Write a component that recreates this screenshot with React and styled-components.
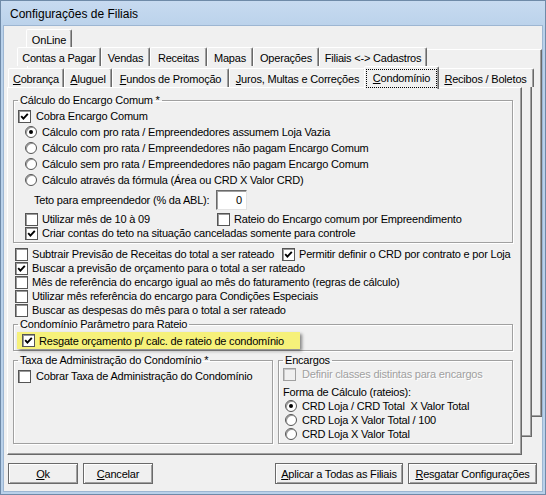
import React from 'react';
import styled, { createGlobalStyle } from 'styled-components';

const Global = createGlobalStyle`
  html, body { margin: 0; padding: 0; background: #fff; }
  body {
    font-family: "Liberation Sans", Arial, sans-serif;
    font-size: 11px;
    letter-spacing: -0.2px;
    color: #000;
  }
  * { box-sizing: border-box; }
`;

const Window = styled.div`
  width: 546px;
  height: 495px;
  background: linear-gradient(#c7daf0, #b9d1ea 30px);
  border: 1px solid #6f8aa8;
  padding: 0 3px 3px 3px;
  display: flex;
  flex-direction: column;
`;

const TitleBar = styled.div`
  height: 25px;
  flex: none;
  display: flex;
  align-items: center;
  padding-left: 6px;
  font-size: 12px;
  letter-spacing: 0;
`;

const Client = styled.div`
  flex: 1;
  background: #f0f0f0;
  display: flex;
  flex-direction: column;
  padding-top: 3px;
  box-shadow: 0 0 0 1px #9db6d2;
`;

const TabRow = styled.div`
  position: relative;
  z-index: 2;
  display: flex;
  align-items: flex-end;
  height: ${p => p.$h}px;
  padding-left: ${p => p.$indent}px;
`;

const Tab = styled.div`
  flex: none;
  width: ${p => p.$w}px;
  height: ${p => p.$th}px;
  background: #f0f0f0;
  border: 1px solid;
  border-bottom: none;
  border-color: #fff #696969 transparent #fff;
  border-radius: 2px 2px 0 0;
  box-shadow: inset -1px 0 0 #a0a0a0;
  display: flex;
  align-items: center;
  justify-content: center;
  padding-top: 2px;
  white-space: nowrap;
`;

const ActiveTab = styled(Tab)`
  position: relative;
  width: ${p => p.$w + 4}px;
  height: ${p => p.$th + 4}px;
  margin: 0 -2px -2px -2px;
  padding-top: 0;
  z-index: 3;
`;

const Focus = styled.span`
  border: 1px dotted #000;
  padding: 2px 6px 2px 6px;
  line-height: 13px;
`;

const PageStack = styled.div`
  position: relative;
  margin-left: 3px;
  width: 515px;
  height: 368px;
  flex: none;
`;

const BackPage = styled.div`
  position: absolute;
  z-index: 0;
  left: ${p => p.$dx}px;
  top: ${p => -p.$dy}px;
  width: 100%;
  height: 100%;
  background: #f0f0f0;
  border: 1px solid;
  border-color: #fff #696969 #696969 #fff;
  box-shadow: inset -1px -1px 0 #a0a0a0;
`;

const Page = styled.div`
  position: relative;
  z-index: 1;
  height: 100%;
  background: #f0f0f0;
  border: 1px solid;
  border-color: #fff #696969 #696969 #fff;
  box-shadow: inset -1px -1px 0 #a0a0a0;
  padding: 6px 8px 0 5px;
`;

const Group = styled.fieldset`
  margin: ${p => p.$mt || 0}px 0 0 0;
  padding: ${p => p.$pad || '1px 0 2px 0'};
  min-width: 0;
  border: 1px solid #a0a0a0;
  box-shadow: inset 1px 1px 0 #fff, 1px 1px 0 #fff;
`;

const Caption = styled.legend`
  margin-left: 4px;
  padding: 0 2px;
  height: 13px;
  line-height: 13px;
  white-space: nowrap;
`;

const Row = styled.div`
  display: flex;
  align-items: center;
  height: ${p => p.$h || 14}px;
  margin-top: ${p => p.$mt || 0}px;
  padding-left: ${p => p.$indent || 0}px;
  white-space: nowrap;
`;

const Item = styled.label`
  display: flex;
  align-items: center;
  gap: ${p => p.$gap || 4}px;
  width: ${p => (p.$w ? `${p.$w}px` : 'auto')};
  flex: none;
  color: ${p => (p.$disabled ? '#a0a0a0' : '#000')};
  text-shadow: ${p => (p.$disabled ? '1px 1px 0 #fff' : 'none')};
`;

const Box = styled.span`
  flex: none;
  width: 13px;
  height: 13px;
  background: ${p => (p.$disabled ? '#f0f0f0' : '#fff')};
  border: 1px solid ${p => (p.$disabled ? '#a0a0a0' : '#555')};
  box-shadow: inset 1px 1px 0 ${p => (p.$disabled ? '#c8c8c8' : '#999')};
  display: flex;
  align-items: center;
  justify-content: center;
`;

const Circle = styled.span`
  flex: none;
  width: 12px;
  height: 12px;
  border-radius: 50%;
  background: #fff;
  border: 1px solid #555;
  box-shadow: inset 1px 1px 0 #999;
  display: flex;
  align-items: center;
  justify-content: center;
`;

const Dot = styled.span`
  width: 4px;
  height: 4px;
  border-radius: 50%;
  background: #000;
`;

const Text = styled.span`
  width: ${p => (p.$w ? `${p.$w}px` : 'auto')};
  flex: none;
`;

const NumInput = styled.div`
  width: 31px;
  height: 20px;
  background: #fff;
  border: 1px solid;
  border-color: #6a6a6a #e3e3e3 #e3e3e3 #6a6a6a;
  box-shadow: inset 1px 1px 0 #a0a0a0;
  display: flex;
  align-items: center;
  justify-content: flex-end;
  padding-right: 4px;
`;

const Highlight = styled.div`
  display: flex;
  align-items: center;
  width: 283px;
  height: 17px;
  margin-left: 3px;
  padding-left: 5px;
  background: #f6f17a;
  box-shadow: 2px 2px 3px rgba(0, 0, 0, 0.45);
`;

const Columns = styled.div`
  display: grid;
  grid-template-columns: 260px 235px;
  column-gap: 5px;
  margin-top: 3px;
`;

const ButtonBar = styled.div`
  display: flex;
  height: 21px;
  margin-top: 8px;
  padding: 0 5px 0 4px;
  gap: 5px;
`;

const Button = styled.div`
  width: ${p => p.$w}px;
  height: 21px;
  margin-left: ${p => (p.$push ? 'auto' : '0')};
  border: 1px solid #6a6a6a;
  box-shadow: inset 1px 1px 0 #fff, inset -1px -1px 0 #a0a0a0;
  display: flex;
  align-items: center;
  justify-content: center;
  white-space: nowrap;
`;

function CheckMark() {
  return (
    <svg width="9" height="9" viewBox="0 0 9 9">
      <polyline points="1.2,4.2 3.4,6.6 7.8,1.8" fill="none" stroke="#000" strokeWidth="1.9" />
    </svg>
  );
}

function Check({ checked, disabled, children, w, gap }) {
  return (
    <Item $w={w} $gap={gap} $disabled={disabled}>
      <Box $disabled={disabled}>{checked && <CheckMark />}</Box>
      <span>{children}</span>
    </Item>
  );
}

function Radio({ checked, children, gap }) {
  return (
    <Item $gap={gap}>
      <Circle>{checked && <Dot />}</Circle>
      <span>{children}</span>
    </Item>
  );
}

const row2 = [
  ['Contas a Pagar', 84],
  ['Vendas', 49],
  ['Receitas', 57],
  ['Mapas', 46],
  ['Operações', 66],
  ['Filiais <-> Cadastros', 108],
];

const row3 = [
  ['C', 'obrança', 56],
  ['A', 'luguel', 48],
  ['F', 'undos de Promoção', 117],
  ['J', 'uros, Multas e Correções', 137],
  ['C', 'ondomínio', 71, true],
  ['R', 'ecibos / Boletos', 97],
];

export default function App() {
  return (
    <>
      <Global />
      <Window>
        <TitleBar>Configurações de Filiais</TitleBar>
        <Client>
          <TabRow $h={18} $indent={22}>
            <Tab $w={46} $th={18}>OnLine</Tab>
          </TabRow>
          <TabRow $h={19} $indent={13}>
            {row2.map(([t, w]) => (
              <Tab key={t} $w={w} $th={19}>{t}</Tab>
            ))}
          </TabRow>
          <TabRow $h={21} $indent={4}>
            {row3.map(([k, rest, w, active]) =>
              active ? (
                <ActiveTab key={rest} $w={w} $th={19}>
                  <Focus><u>{k}</u>{rest}</Focus>
                </ActiveTab>
              ) : (
                <Tab key={rest} $w={w} $th={19}><span><u>{k}</u>{rest}</span></Tab>
              )
            )}
          </TabRow>

          <PageStack>
            <BackPage $dx={20} $dy={38} />
            <BackPage $dx={10} $dy={18} />
            <Page>
              <Group>
                <Caption>Cálculo do Encargo Comum *</Caption>
                <Row $h={16} $indent={4}>
                  <Check checked gap={5}>Cobra Encargo Comum</Check>
                </Row>
                <Row $h={16} $indent={11}>
                  <Radio checked gap={5}>Cálculo com pro rata / Empreendedores assumem Loja Vazia</Radio>
                </Row>
                <Row $h={16} $indent={11}>
                  <Radio gap={5}>Cálculo com pro rata / Empreendedores não pagam Encargo Comum</Radio>
                </Row>
                <Row $h={16} $indent={11}>
                  <Radio gap={5}>Cálculo sem pro rata / Empreendedores não pagam Encargo Comum</Radio>
                </Row>
                <Row $h={16} $indent={11}>
                  <Radio gap={5}>Cálculo através da fórmula (Área ou CRD X Valor CRD)</Radio>
                </Row>
                <Row $h={20} $mt={2} $indent={20}>
                  <Text $w={182}>Teto para empreendedor (% da ABL):</Text>
                  <NumInput>0</NumInput>
                </Row>
                <Row $mt={2} $indent={11}>
                  <Check w={192} gap={4}>Utilizar mês de 10 à 09</Check>
                  <Check gap={4}>Rateio do Encargo comum por Empreendimento</Check>
                </Row>
                <Row $indent={11}>
                  <Check checked gap={4}>Criar contas do teto na situação canceladas somente para controle</Check>
                </Row>
              </Group>

              <Row $mt={4} $indent={2}>
                <Check w={267}>Subtrair Previsão de Receitas do total a ser rateado</Check>
                <Check checked>Permitir definir o CRD por contrato e por Loja</Check>
              </Row>
              <Row $indent={2}>
                <Check checked>Buscar a previsão de orçamento para o total a ser rateado</Check>
              </Row>
              <Row $indent={2}>
                <Check>Mês de referência do encargo igual ao mês do faturamento (regras de cálculo)</Check>
              </Row>
              <Row $indent={2}>
                <Check>Utilizar mês referência do encargo para Condições Especiais</Check>
              </Row>
              <Row $indent={2}>
                <Check>Buscar as despesas do mês para o total a ser rateado</Check>
              </Row>

              <Group $mt={1} $pad="1px 0 1px 0">
                <Caption>Condomínio Parâmetro para Rateio</Caption>
                <Highlight>
                  <Check checked>Resgate orçamento p/ calc. de rateio de condomínio</Check>
                </Highlight>
              </Group>

              <Columns>
                <Group $pad="2px 0 2px 0">
                  <Caption>Taxa de Administração do Condomínio *</Caption>
                  <Row $indent={4}>
                    <Check gap={5}>Cobrar Taxa de Administração do Condomínio</Check>
                  </Row>
                </Group>
                <Group $pad="0 0 2px 0">
                  <Caption>Encargos</Caption>
                  <Row $indent={4}>
                    <Check disabled gap={6}>Definir classes distintas para encargos</Check>
                  </Row>
                  <Row $mt={4} $indent={4}>
                    <Text>Forma de Cálculo (rateios):</Text>
                  </Row>
                  <Row $indent={6}>
                    <Radio checked gap={5}>CRD Loja / CRD Total&nbsp; X Valor Total</Radio>
                  </Row>
                  <Row $indent={6}>
                    <Radio gap={5}>CRD Loja X Valor Total / 100</Radio>
                  </Row>
                  <Row $indent={6}>
                    <Radio gap={5}>CRD Loja X Valor Total</Radio>
                  </Row>
                </Group>
              </Columns>
            </Page>
          </PageStack>

          <ButtonBar>
            <Button $w={70}><span><u>O</u>k</span></Button>
            <Button $w={70}><span><u>C</u>ancelar</span></Button>
            <Button $w={128} $push><span><u>A</u>plicar a Todas as Filiais</span></Button>
            <Button $w={129}><span><u>R</u>esgatar Configurações</span></Button>
          </ButtonBar>
        </Client>
      </Window>
    </>
  );
}
